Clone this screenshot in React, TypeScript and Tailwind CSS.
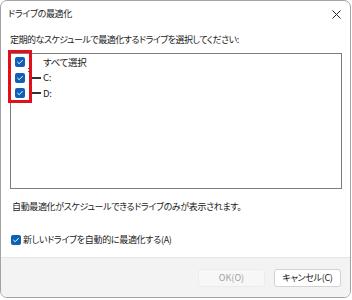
const font = "font-['Noto_Sans_CJK_JP','Noto_Sans',sans-serif] [font-feature-settings:'palt']";

function Check({ className = '' }: { className?: string }) {
  return (
    <span className={`flex h-[10px] w-[10px] shrink-0 items-center justify-center rounded-[2px] bg-[#0f5fb5] ${className}`}>
      <svg width="8" height="8" viewBox="0 0 8 8" fill="none">
        <path d="M1.6 4.2 L3.2 5.7 L6.4 2.4" stroke="white" strokeWidth="1" strokeLinecap="round" strokeLinejoin="round" />
      </svg>
    </span>
  );
}

function DriveRow({ label, tree }: { label: string; tree?: boolean }) {
  return (
    <div className="flex h-[15.5px] items-center">
      <Check />
      <span className="relative flex h-full w-[18px] items-center">
        {tree && <span className="absolute left-[7px] top-1/2 h-[2px] w-[9px] -translate-y-1/2 bg-[#333]" />}
      </span>
      <span className="text-[9.5px] leading-none tracking-[-0.3px] text-[#1a1a1a]">{label}</span>
    </div>
  );
}

export default function App() {
  return (
    <div className={`relative h-[300px] w-[352px] bg-white ${font}`}>
      <div className="flex h-[298px] w-[351px] flex-col overflow-hidden rounded-[7px] border border-[#a3a3a3] bg-white">
        <div className="flex h-[26px] shrink-0 items-center justify-between pl-[7px] pr-[9px]">
          <span className="text-[9px] tracking-[-0.3px] text-[#1a1a1a]">ドライブの最適化</span>
          <svg width="9" height="9" viewBox="0 0 9 9">
            <path d="M0.5 0.5 L8.5 8.5 M8.5 0.5 L0.5 8.5" stroke="#222" strokeWidth="1" />
          </svg>
        </div>

        <div className="flex flex-1 flex-col">
          <div className="mt-[6px] pl-[9px] text-[9px] leading-[14px] tracking-[-0.5px] text-[#1a1a1a]">
            定期的なスケジュールで最適化するドライブを選択してください:
          </div>

          <div className="relative ml-[9px] mt-[6px] h-[136px] w-[332px] border border-[#7c7c7c] pl-[4px] pt-[0.5px]">
            <DriveRow label="すべて選択" />
            <DriveRow label="C:" tree />
            <DriveRow label="D:" tree />
            <span className="absolute left-[17px] top-[14px] h-[1px] w-[3px] bg-[#555]" />
            <span className="absolute left-[17px] top-[17px] h-[1px] w-[3px] bg-[#555]" />
          </div>

          <div className="mt-[11px] pl-[11px] text-[9px] leading-[14px] tracking-[-0.35px] text-[#1a1a1a]">
            自動最適化がスケジュールできるドライブのみが表示されます。
          </div>

          <div className="mt-[19px] flex items-center gap-[2px] pl-[10px]">
            <Check />
            <span className="text-[9px] leading-[14px] tracking-[-0.3px] text-[#1a1a1a]">新しいドライブを自動的に最適化する(A)</span>
          </div>
        </div>

        <div className="flex h-[40px] shrink-0 items-center justify-end gap-[9px] border-t border-[#e6e6e6] bg-[#f3f3f3] pr-[9px]">
          <div className="flex h-[18px] w-[67px] items-center justify-center rounded-[3px] border border-[#ececec] bg-[#f7f7f7] text-[9px] text-[#a2a2a2]">
            OK(O)
          </div>
          <div className="flex h-[18px] w-[67px] items-center justify-center rounded-[3px] border border-[#d2d2d2] bg-white text-[9px] tracking-[-0.3px] text-[#1a1a1a]">
            キャンセル(C)
          </div>
        </div>
      </div>

      <div className="absolute left-[8px] top-[50px] h-[53px] w-[24px] border-[3px] border-[#e2101b]" />
    </div>
  );
}
